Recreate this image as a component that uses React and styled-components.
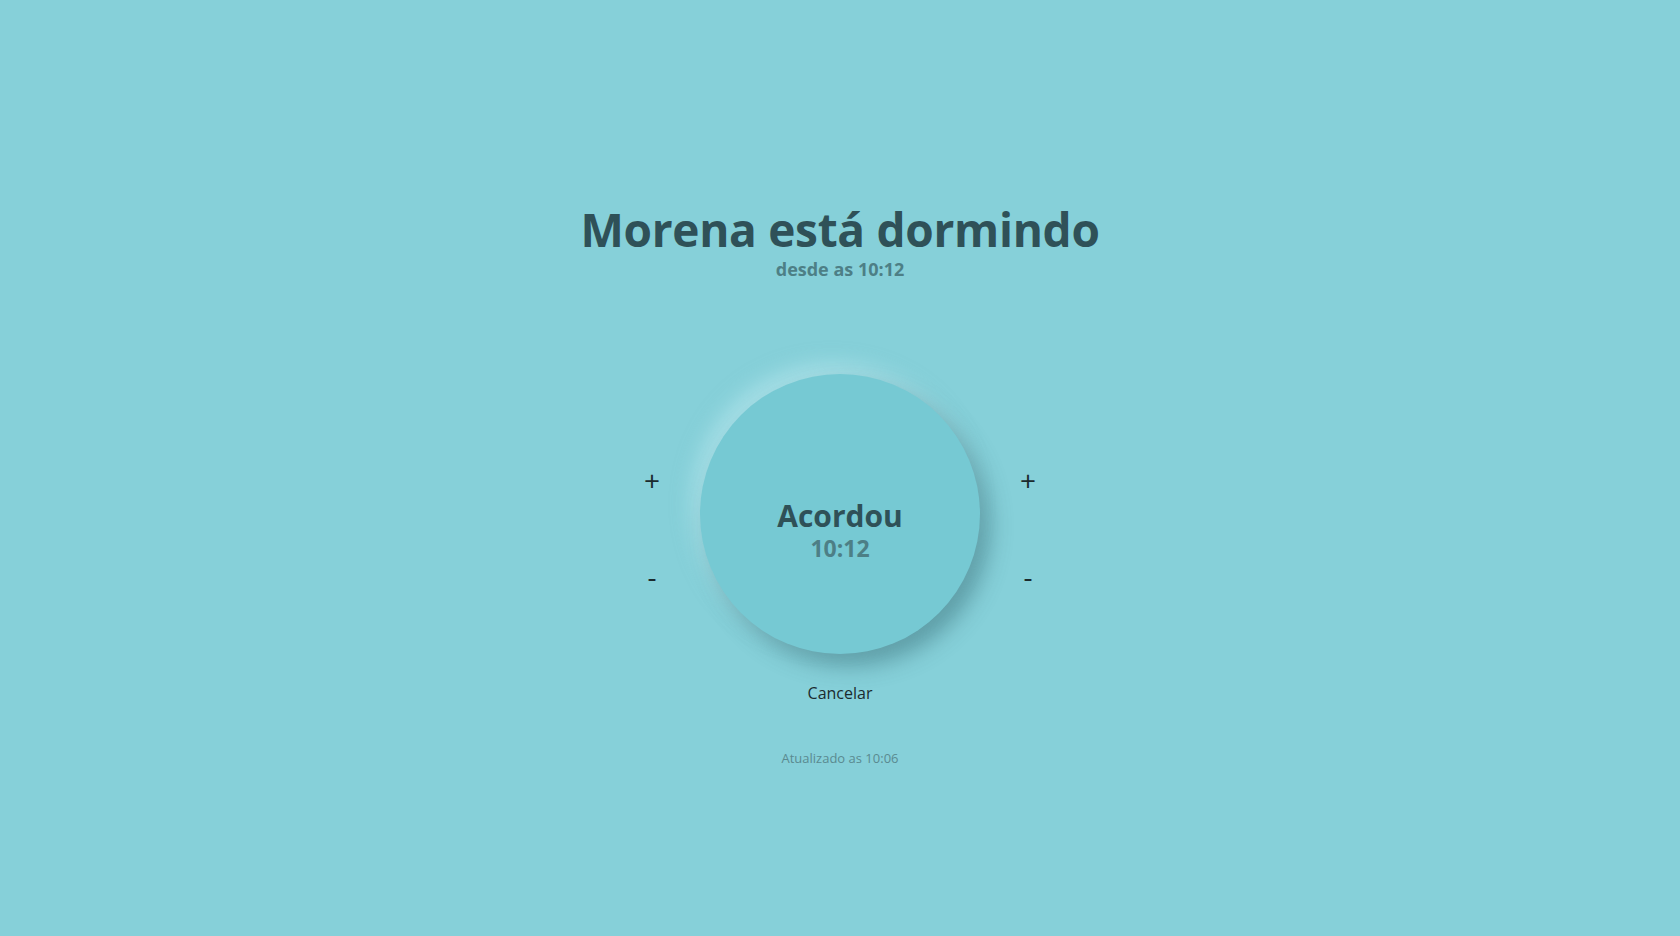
import styled, { createGlobalStyle } from "styled-components";

const GlobalStyle = createGlobalStyle`
  html, body {
    margin: 0;
    padding: 0;
    background: #86d0d9;
  }
  body {
    font-family: "Open Sans", "Noto Sans", sans-serif;
  }
`;

const Page = styled.div`
  min-height: 100vh;
  display: flex;
  flex-direction: column;
  align-items: center;
  background: #86d0d9;
  padding-top: 203px;
  box-sizing: border-box;
`;

const Title = styled.h1`
  margin: 0;
  font-size: 46px;
  line-height: 52px;
  font-weight: 700;
  color: #2f5158;
  letter-spacing: -0.3px;
`;

const Subtitle = styled.div`
  margin-top: 2px;
  font-size: 18px;
  line-height: 24px;
  font-weight: 700;
  color: #4d7f86;
`;

const Controls = styled.div`
  margin-top: 93px;
  display: flex;
  align-items: center;
  gap: 36px;
`;

const Adjusters = styled.div`
  width: 24px;
  height: 280px;
  display: flex;
  flex-direction: column;
  justify-content: center;
  align-items: center;
  gap: 62px;
  padding-top: 28px;
  box-sizing: border-box;
`;

const Step = styled.button`
  border: none;
  background: none;
  padding: 0;
  font-family: inherit;
  font-size: 28px;
  line-height: 34px;
  font-weight: 500;
  color: #1b2b2e;
  cursor: pointer;
`;

const WakeButton = styled.button`
  width: 280px;
  height: 280px;
  border-radius: 50%;
  border: none;
  background: #76c9d3;
  display: flex;
  flex-direction: column;
  align-items: center;
  justify-content: center;
  gap: 2px;
  font-family: inherit;
  cursor: pointer;
  box-shadow: 10px 12px 22px rgba(40, 90, 100, 0.42),
    -8px -10px 20px rgba(200, 240, 245, 0.5);
  padding: 0;
  padding-top: 32px;
`;

const ButtonLabel = styled.span`
  font-size: 30px;
  line-height: 34px;
  font-weight: 700;
  color: #2f5158;
`;

const ButtonTime = styled.span`
  font-size: 23px;
  line-height: 26px;
  font-weight: 700;
  color: #4d7f86;
`;

const Cancel = styled.button`
  margin-top: 27px;
  border: none;
  background: none;
  padding: 0;
  font-family: inherit;
  font-size: 16px;
  line-height: 24px;
  color: #1b2b2e;
  cursor: pointer;
`;

const Updated = styled.div`
  margin-top: 44px;
  font-size: 13px;
  line-height: 18px;
  color: #5a8a90;
`;

export default function App() {
  return (
    <>
      <GlobalStyle />
      <Page>
        <Title>Morena está dormindo</Title>
        <Subtitle>desde as 10:12</Subtitle>
        <Controls>
          <Adjusters>
            <Step>+</Step>
            <Step>-</Step>
          </Adjusters>
          <WakeButton>
            <ButtonLabel>Acordou</ButtonLabel>
            <ButtonTime>10:12</ButtonTime>
          </WakeButton>
          <Adjusters>
            <Step>+</Step>
            <Step>-</Step>
          </Adjusters>
        </Controls>
        <Cancel>Cancelar</Cancel>
        <Updated>Atualizado as 10:06</Updated>
      </Page>
    </>
  );
}
